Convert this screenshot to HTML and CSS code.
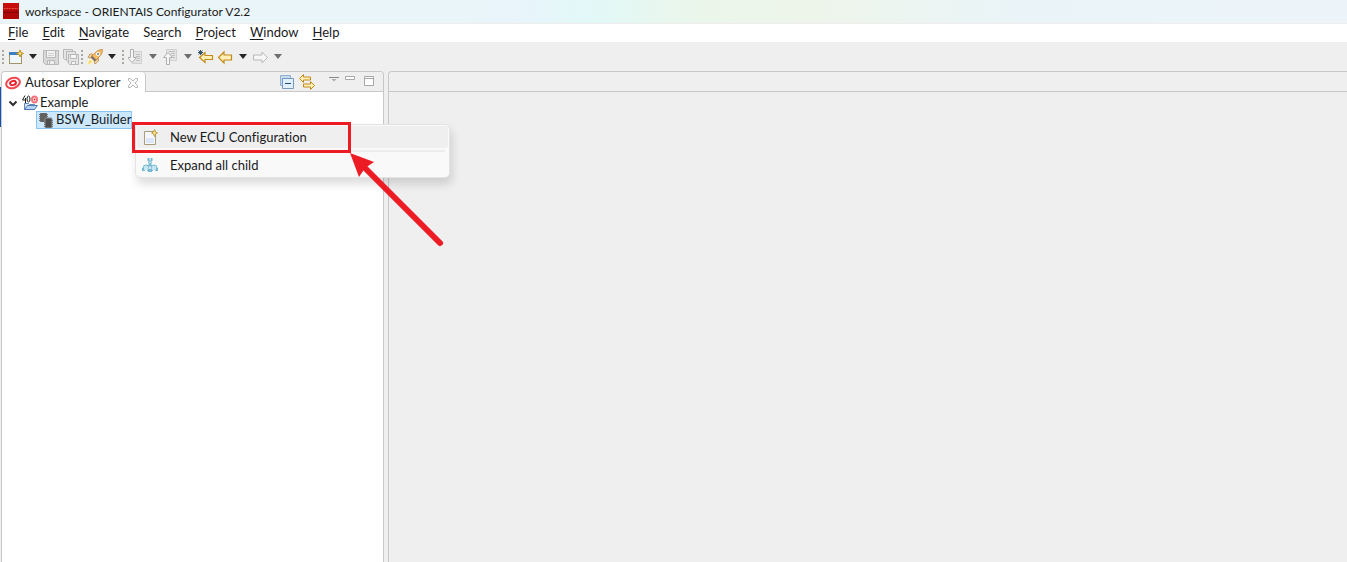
FILE: index.html
```html
<!DOCTYPE html>
<html lang="en">
<head>
  <meta charset="UTF-8">
  <title>workspace - ORIENTAIS Configurator V2.2</title>
  <link rel="stylesheet" href="styles.css">
</head>
<body>
  <header class="titlebar">
    <svg class="logo" width="16" height="16" viewBox="0 0 16 16">
      <rect width="16" height="16" fill="#b00808"/>
      <rect width="16" height="7" fill="#c80c0c"/>
      <path d="M1 5.500h14" stroke="#e05850" stroke-dasharray="1 .6"/>
      <path d="M1 9.500h14" stroke="#680404" stroke-dasharray="1 .5"/>
    </svg>
    <span>workspace - ORIENTAIS Configurator V2.2</span>
  </header>

  <nav class="menubar">
    <button><u>F</u>ile</button>
    <button><u>E</u>dit</button>
    <button><u>N</u>avigate</button>
    <button>Se<u>a</u>rch</button>
    <button><u>P</u>roject</button>
    <button><u>W</u>indow</button>
    <button><u>H</u>elp</button>
  </nav>

  <div class="toolbar">
    <i class="grip"></i>
    <button class="tool" aria-label="New">
      <svg width="16" height="16" viewBox="0 0 16 16">
        <rect x="1.500" y="3.500" width="12" height="11" fill="#eef6fc" stroke="#a09468"/>
        <path d="M1 3h10v3H1z" fill="#3c80c4"/>
        <path d="M12 1l1 2.500 2.500 1-2.500 1-1 2.500-1-2.500-2.500-1 2.500-1z" fill="#f8dc78" stroke="#c09020"/>
      </svg>
    </button>
    <button class="arrow" aria-label="New menu"></button>
    <button class="tool" aria-label="Save" disabled>
      <svg width="16" height="16" viewBox="0 0 16 16" fill="#d8d8d8" stroke="#b8b8b8">
        <path d="M.5 1.500h15v14h-13l-2-2z"/>
        <path d="M3.500 1.500h9v7h-9z" fill="#f2f2f2"/>
        <path d="M5 4.500h6M5 6.500h6" stroke="#d0d0d0"/>
        <path d="M4.500 11.500h7v4h-7z" fill="#eeeeee"/>
        <path d="M6.500 12v3"/>
      </svg>
    </button>
    <button class="tool" aria-label="Save all" disabled>
      <svg width="16" height="16" viewBox="0 0 16 16" fill="#e4e4e4" stroke="#b8b8b8">
        <path d="M.5 .5h9v10h-8l-1-1z"/>
        <path d="M3.500 2.500h9v10h-8l-1-1z"/>
        <path d="M5.500 5.500h10v10h-9l-1-1z"/>
        <path d="M7.500 5.500h6v4h-6z" fill="#f6f6f6"/>
        <path d="M8.500 12.500h4v3h-4z" fill="#f6f6f6"/>
      </svg>
    </button>
    <i class="grip"></i>
    <button class="tool" aria-label="Launch">
      <svg width="16" height="16" viewBox="0 0 16 16">
        <path d="M5.500 5H3L1 8.500l3 .5zM11.500 9.500V12L8 15l-1-3z" fill="#eed4a4" stroke="#c89c60"/>
        <path d="M4 8L9.500 2.500Q12 .5 15.500 .5 15.500 4 13.500 6.500L8 12z" fill="#f8bc64" stroke="#d09448"/>
        <path d="M5.500 7l4 4L7.500 12.500 3.500 8.500z" fill="#807068"/>
        <circle cx="11" cy="5" r="2" fill="#fff"/>
        <circle cx="11" cy="5" r="1" fill="#587090"/>
        <path d="M3.500 9l3.500 3.500-4 3H.5V13z" fill="#fff4b8"/>
        <path d="M3 11l2 2-4 2z" fill="#f8cc58"/>
      </svg>
    </button>
    <button class="arrow" aria-label="Launch menu"></button>
    <i class="grip"></i>
    <button class="tool" aria-label="Next annotation" disabled>
      <svg width="16" height="16" viewBox="0 0 16 16" fill="#f6f6f6" stroke="#b0b0b0">
        <path d="M4.500 2.500h9v12h-9z" fill="#e4e4e4" stroke="#d0d0d0"/>
        <path d="M8 5.500h4M8 7.500h4M9 9.500h3M8 11.500h4" stroke="#c0c0c0"/>
        <path d="M2.500 .5h3v8h3L4 13.500 -.5 8.500h3z"/>
      </svg>
    </button>
    <button class="arrow gray" aria-label="Next annotation menu" disabled></button>
    <button class="tool" aria-label="Previous annotation" disabled>
      <svg width="16" height="16" viewBox="0 0 16 16" fill="#f6f6f6" stroke="#b0b0b0">
        <path d="M3.500 .5h10v11h-10z" fill="#e4e4e4" stroke="#d0d0d0"/>
        <path d="M6 2.500h6M8 4.500h4M9 6.500h3M9 8.500h3" stroke="#c0c0c0"/>
        <path d="M3.500 15.500h3v-7h3L5 3.500 .5 8.500h3z"/>
      </svg>
    </button>
    <button class="arrow gray" aria-label="Previous annotation menu" disabled></button>
    <button class="tool" aria-label="Last edit location">
      <svg width="16" height="16" viewBox="0 0 16 16">
        <path d="M1.500 8.500L7 3.500v3h7.500v4H7v3z" fill="#fff0b8" stroke="#c48a18" stroke-width="1.200"/>
        <path d="M2.500 1v5M0 3.500h5M.5 1.500l4 4M4.500 1.500l-4 4" stroke="#34546c"/>
      </svg>
    </button>
    <button class="tool" aria-label="Back">
      <svg width="16" height="16" viewBox="0 0 16 16">
        <path d="M.5 8.500L6 3v3h7.500v5H6v3z" fill="#fff0b8" stroke="#c48a18" stroke-width="1.200"/>
      </svg>
    </button>
    <button class="arrow" aria-label="Back menu"></button>
    <button class="tool" aria-label="Forward" disabled>
      <svg width="16" height="16" viewBox="0 0 16 16">
        <path d="M14.500 8.500L9 3v3H.5v5H9v3z" fill="#f6f6f6" stroke="#b8b8b8"/>
      </svg>
    </button>
    <button class="arrow gray" aria-label="Forward menu" disabled></button>
  </div>

  <main class="workbench">
    <section class="explorer">
      <div class="view-head">
        <div class="tab">
          <svg width="16" height="16" viewBox="0 0 16 16">
            <ellipse cx="8" cy="8" rx="7" ry="5" transform="rotate(-20 8 8)" fill="#fff" stroke="#f04850" stroke-width="2"/>
            <ellipse cx="8" cy="8" rx="3" ry="2" transform="rotate(-20 8 8)" fill="#fff" stroke="#e8202c" stroke-width="2"/>
          </svg>
          <h1>Autosar Explorer</h1>
          <button class="tool" aria-label="Close">
            <svg width="12" height="12" viewBox="0 0 12 12">
              <path d="M1.500 1.500h2L6 4l2.500-2.500h2v2L8 6l2.500 2.500v2h-2L6 8l-2.500 2.500h-2v-2L4 6 1.500 3.500z" fill="#fafafa" stroke="#b8b8b8"/>
            </svg>
          </button>
        </div>
        <div class="view-tools">
          <button class="tool" aria-label="Collapse all">
            <svg width="16" height="16" viewBox="0 0 16 16">
              <path d="M1.500 1.500h10v10h-10z" fill="#c4dcf0" stroke="#94b0d0"/>
              <path d="M3.500 4.500h11v10h-11z" fill="#e0f0fc" stroke="#7898c0"/>
              <path d="M6 9.500h6" stroke="#1c4c80"/>
            </svg>
          </button>
          <button class="tool" aria-label="Link with editor">
            <svg width="16" height="16" viewBox="0 0 16 16" fill="#fff0b8" stroke="#c48a18">
              <path d="M.5 4.500l4-4v2.500h7v3h-7v2.500z"/>
              <path d="M15.500 11.500l-4-4V10h-7v3h7v2.500z"/>
            </svg>
          </button>
          <button class="tool view-menu" aria-label="View menu">
            <svg width="10" height="12" viewBox="0 0 10 12">
              <path d="M0 3.500h10" stroke="#888"/>
              <path d="M2.500 5h5L5 7.500z" fill="#aaa"/>
            </svg>
          </button>
          <button class="tool" aria-label="Minimize">
            <svg width="12" height="12" viewBox="0 0 12 12"><path d="M1.500 2.500h9v3h-9z" fill="#fff" stroke="#a8a8a8"/></svg>
          </button>
          <button class="tool" aria-label="Maximize">
            <svg width="12" height="12" viewBox="0 0 12 12"><path d="M1.500 2.500h9v9h-9zM1 4.500h10" fill="#fff" stroke="#a8a8a8"/></svg>
          </button>
        </div>
      </div>

      <ul class="tree">
        <li class="row">
          <svg width="10" height="10" viewBox="0 0 10 10"><path d="M1.500 3.500L5 7l3.500-3.500" fill="none" stroke="#303030" stroke-width="2"/></svg>
          <svg class="project" width="16" height="16" viewBox="0 0 16 16">
            <path d="M2.500 14.500v-6h4l1 1h5v5z" fill="#dce8f8" stroke="#6088bc"/>
            <path d="M5.500 10.500h10l-3 4h-10z" fill="#b8d4f4" stroke="#5078b0"/>
            <path d="M3 .5L.5 5H4M3.500 3v5" fill="none" stroke="#202020"/>
            <ellipse cx="6.500" cy="4" rx="1.500" ry="3" fill="#fff" stroke="#202020"/>
            <ellipse cx="12.500" cy="4.500" rx="2.500" ry="3" fill="#fff" stroke="#f4747c" stroke-width="2"/>
            <circle cx="12.500" cy="4.500" r="1" fill="#e02030"/>
          </svg>
          <span>Example</span>
        </li>
        <li class="row child">
          <div class="selected">
            <svg width="16" height="16" viewBox="0 0 16 16">
              <path d="M1 2.500h9M1 4.500h9M1 6.500h9M1 8.500h9M6 8.500h9M6 10.500h9M6 12.500h9M6 14.500h9" stroke="#707070"/>
              <rect x="2" y="1" width="7" height="9" rx="1" fill="#626262"/>
              <rect x="7" y="6" width="7" height="10" rx="1" fill="#4c4c4c" stroke="#909090"/>
            </svg>
            <span>BSW_Builder</span>
          </div>

          <div class="popup">
            <div class="popup-items">
              <button class="item active">
                <svg width="16" height="16" viewBox="0 0 16 16">
                  <path d="M2.500 2.500h11v13h-11z" fill="#f4f8fe" stroke="#a89c78"/>
                  <path d="M4 9h8v5H4z" fill="#dce8fa"/>
                  <path d="M12.500 .5l1 2.500 2 1-2 1-1 2.500-1-2.500-2-1 2-1z" fill="#f8e490" stroke="#c0a040"/>
                </svg>
                <span>New ECU Configuration</span>
              </button>
              <hr>
              <button class="item">
                <svg width="16" height="16" viewBox="0 0 16 16" fill="#c4e8f2" stroke="#78b8d0">
                  <path d="M6.500 1v3M9.500 1v3M8 5v3l-4 2M8 8l4 2" fill="none" stroke-width="2"/>
                  <circle cx="8" cy="5.500" r="1.500"/>
                  <circle cx="4" cy="11" r="3"/>
                  <circle cx="12" cy="11" r="3"/>
                  <path d="M1 11v3M7 12v3M9 12v3M15 11v3" stroke-width="2"/>
                  <path d="M3 13h2v2H3zM11 13h2v2h-2z" fill="#f9f9f9" stroke="none"/>
                </svg>
                <span>Expand all child</span>
              </button>
            </div>
            <div class="highlight"></div>
            <svg class="pointer" width="96" height="96" viewBox="0 0 96 96">
              <path d="M13 13l78 78" stroke="#ed1c24" stroke-width="6" stroke-linecap="round"/>
              <path d="M1 1l24 9-9 6-6 9z" fill="#ed1c24"/>
            </svg>
          </div>
        </li>
      </ul>
    </section>

    <section class="editor">
      <div class="view-head"></div>
    </section>
  </main>
</body>
</html>
```

FILE: styles.css
```css
* { box-sizing: border-box; }

body {
  margin: 0;
  height: 100vh;
  display: flex;
  flex-direction: column;
  overflow: hidden;
  background-color: #efefef;
  color: #1a1a1a;
  font: 13px/17px Lato, "Open Sans", sans-serif;
  font-variant-ligatures: none;
}

button {
  margin: 0;
  padding: 0;
  border: none;
  background: none;
  color: inherit;
  font: inherit;
  font-variant-ligatures: none;
}

svg { display: block; flex: none; }

.titlebar {
  display: flex;
  align-items: center;
  gap: 6px;
  height: 24px;
  padding: 0 3px 1px;
  border-bottom: 1px solid #eeeeee;
  background: linear-gradient(to right, #e9f5f8 0%, #e9f5f8 34%, #e9f4fb 38%, #e2f8f7 44%, #ebf6ea 52%, #edf5ea 60%, #eaf4f8 76%, #ecf4f9 100%);
  font-size: 12px;
}

.menubar {
  display: flex;
  gap: 14px;
  height: 18px;
  padding: 0 8px;
  background-color: #ffffff;
}
.menubar button { height: 17px; }
.menubar u { text-underline-offset: 2px; }

.toolbar {
  display: flex;
  align-items: center;
  gap: 4px;
  height: 29px;
  padding-left: 2px;
}
.grip {
  width: 2px;
  height: 14px;
  background: repeating-linear-gradient(#a8a8a0 0 2px, transparent 2px 4px);
}
.toolbar .tool + .grip { margin-left: -2px; }
.arrow {
  width: 8px;
  height: 5px;
  margin: 0 2px 0 1px;
  background-color: #262626;
  clip-path: polygon(0 0, 100% 0, 50% 100%);
}
.arrow.gray { background-color: #6e6e6e; }

/* the 1px strip on the left is the window lying behind this one */
.workbench {
  flex: 1;
  display: flex;
  gap: 4px;
  padding-left: 1px;
  background: linear-gradient(#1450b8, #1450b8) 0 16px / 1px 40px no-repeat;
}
.explorer, .editor {
  border: 1px solid #c8c8c8;
  border-bottom: none;
  border-radius: 4px 4px 0 0;
}
.explorer { width: 383px; background-color: #ffffff; }
.editor { flex: 1; border-right: none; border-top-right-radius: 0; }

.view-head {
  display: flex;
  justify-content: space-between;
  height: 20px;
  border-bottom: 1px solid #c8c8c8;
  border-radius: 4px 4px 0 0;
  background-color: #efefef;
}
.tab {
  display: flex;
  align-items: center;
  gap: 4px;
  height: 20px;
  padding: 1px 6px 0 3px;
  border-right: 1px solid #c8c8c8;
  border-radius: 4px 4px 0 0;
  background-color: #ffffff;
}
.tab h1 { margin: 0; font: inherit; font-variant-ligatures: none; }
.tab .tool { margin-left: 2px; }
.view-tools {
  display: flex;
  align-items: flex-start;
  gap: 4px;
  padding: 2px 5px 0 0;
}
.view-tools .view-menu { margin: 0 1px 0 10px; }
.view-tools .view-menu ~ .tool { margin-right: 3px; }

.tree {
  margin: 0;
  padding: 2px 0 0 6px;
  list-style: none;
}
.row { display: flex; align-items: center; height: 17px; }
.row .project { margin: 0 2px 0 4px; }
.child { position: relative; width: max-content; padding-left: 28px; }
.selected {
  display: flex;
  align-items: center;
  gap: 2px;
  height: 18px;
  padding-left: 1px;
  border: 1px solid #8cc4ee;
  background-color: #cce8ff;
}

/* context menu, opened at the pointer over the tree and the editor */
.popup {
  position: absolute;
  left: 127px;
  top: 13px;
  width: 315px;
}
.popup-items {
  padding: 1px;
  border: 1px solid #e4e4e4;
  border-radius: 5px;
  background-color: #f9f9f9;
  box-shadow: 2px 6px 10px rgba(0, 0, 0, .14);
}
.item {
  display: flex;
  align-items: center;
  gap: 12px;
  width: 100%;
  height: 22px;
  padding-left: 5px;
  border-radius: 3px;
}
.item.active { background-color: #efefef; }
.popup hr { margin: 2px 3px; border: none; border-top: 2px solid #ececec; }
.highlight {
  position: absolute;
  left: -3px;
  top: -2px;
  width: 219px;
  height: 31px;
  border: 3px solid #ed1c24;
}
.pointer { position: absolute; left: 214px; top: 28px; }
```
